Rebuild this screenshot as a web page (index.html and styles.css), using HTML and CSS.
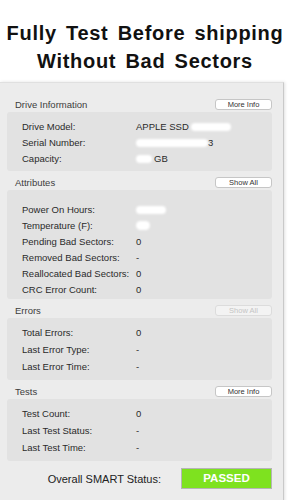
FILE: index.html
```html
<!DOCTYPE html>
<html lang="en">
<head>
  <meta charset="UTF-8" />
  <title>SMART Status</title>
  <link rel="stylesheet" href="styles.css">
</head>
<body>
  <header class="headline">
    <div>Fully Test Before shipping</div>
    <div>Without Bad Sectors</div>
  </header>

  <div class="panel">
    <section class="group">
      <div class="group-head">
        <span>Drive Information</span>
        <button class="mini">More Info</button>
      </div>
      <div class="box">
        <div class="row"><span>Drive Model:</span><span>APPLE SSD <i class="blot w-model"></i></span></div>
        <div class="row"><span>Serial Number:</span><span><i class="blot w-serial"></i>3</span></div>
        <div class="row"><span>Capacity:</span><span><i class="blot w-cap"></i>GB</span></div>
      </div>
    </section>

    <section class="group">
      <div class="group-head">
        <span>Attributes</span>
        <button class="mini">Show All</button>
      </div>
      <div class="box tall">
        <div class="row"><span>Power On Hours:</span><span><i class="blot w-hours"></i></span></div>
        <div class="row"><span>Temperature (F):</span><span><i class="blot w-temp"></i></span></div>
        <div class="row"><span>Pending Bad Sectors:</span><span>0</span></div>
        <div class="row"><span>Removed Bad Sectors:</span><span>-</span></div>
        <div class="row"><span>Reallocated Bad Sectors:</span><span>0</span></div>
        <div class="row"><span>CRC Error Count:</span><span>0</span></div>
      </div>
    </section>

    <section class="group">
      <div class="group-head">
        <span>Errors</span>
        <button class="mini" disabled>Show All</button>
      </div>
      <div class="box loose">
        <div class="row"><span>Total Errors:</span><span>0</span></div>
        <div class="row"><span>Last Error Type:</span><span>-</span></div>
        <div class="row"><span>Last Error Time:</span><span>-</span></div>
      </div>
    </section>

    <section class="group">
      <div class="group-head">
        <span>Tests</span>
        <button class="mini">More Info</button>
      </div>
      <div class="box loose">
        <div class="row"><span>Test Count:</span><span>0</span></div>
        <div class="row"><span>Last Test Status:</span><span>-</span></div>
        <div class="row"><span>Last Test Time:</span><span>-</span></div>
      </div>
    </section>

    <div class="overall">
      <span>Overall SMART Status:</span>
      <div class="passed">PASSED</div>
    </div>
  </div>
</body>
</html>
```

FILE: styles.css
```css
body {
  margin: 0;
  background: #fff;
  font-family: "Liberation Sans", Arial, sans-serif;
  color: #2b2b2b;
  width: 290px;
  height: 500px;
  overflow: hidden;
}

.headline {
  text-align: center;
  font-family: "Liberation Sans", Arial, sans-serif;
  font-weight: bold;
  font-size: 20px;
  line-height: 28px;
  letter-spacing: 0.7px;
  word-spacing: 3px;
  white-space: nowrap;
  color: #111;
  padding-top: 19px;
  height: 63px;
}

.panel {
  background: #ececec;
  width: 284px;
  height: 420px;
  border-top: 1px solid #e0e0e0;
  border-right: 1px solid #c9c9c9;
  box-shadow: 1px 0 3px rgba(0, 0, 0, 0.12);
  padding-top: 16px;
  box-sizing: border-box;
}

.group {
  margin: 0 11px 6px 7px;
}

.group-head {
  display: flex;
  justify-content: space-between;
  align-items: center;
  padding-left: 8px;
  font-size: 9.5px;
  color: #3c3c3c;
  height: 11px;
  margin-bottom: 2px;
}

.mini {
  width: 57px;
  height: 11px;
  padding: 0;
  background: #fff;
  border: 1px solid #c6c6c6;
  border-radius: 3px;
  font-family: "Liberation Sans", Arial, sans-serif;
  font-size: 7.5px;
  color: #333;
  line-height: 9px;
}

.mini:disabled {
  background: #f3f3f3;
  color: #c4c4c4;
  border-color: #dcdcdc;
}

.box {
  background: #e2e2e2;
  border-radius: 3px;
  padding: 6px 0 5px 15px;
}

.box.tall {
  padding: 11px 0 2px 15px;
}

.row {
  display: grid;
  grid-template-columns: 114px 1fr;
  align-items: center;
  height: 16px;
  font-size: 9.5px;
  color: #2a2a2a;
}

.box.loose .row {
  height: 17px;
}

.blot {
  display: inline-block;
  height: 8px;
  vertical-align: middle;
  background: #fff;
  border-radius: 5px;
  filter: blur(1px);
}

.w-model { width: 40px; }
.w-serial { width: 72px; }
.w-cap { width: 16px; margin-right: 2px; }
.w-hours { width: 30px; }
.w-temp { width: 14px; height: 9px; }

.overall {
  display: flex;
  align-items: center;
  justify-content: flex-end;
  gap: 20px;
  margin: 7px 11px 0 0;
  font-size: 11px;
  color: #222;
}

.passed {
  width: 89px;
  height: 19px;
  background: #7ee21f;
  border: 1px solid #b5b5b5;
  color: #fff;
  font-weight: bold;
  font-size: 11.5px;
  text-align: center;
  line-height: 19px;
}
```
